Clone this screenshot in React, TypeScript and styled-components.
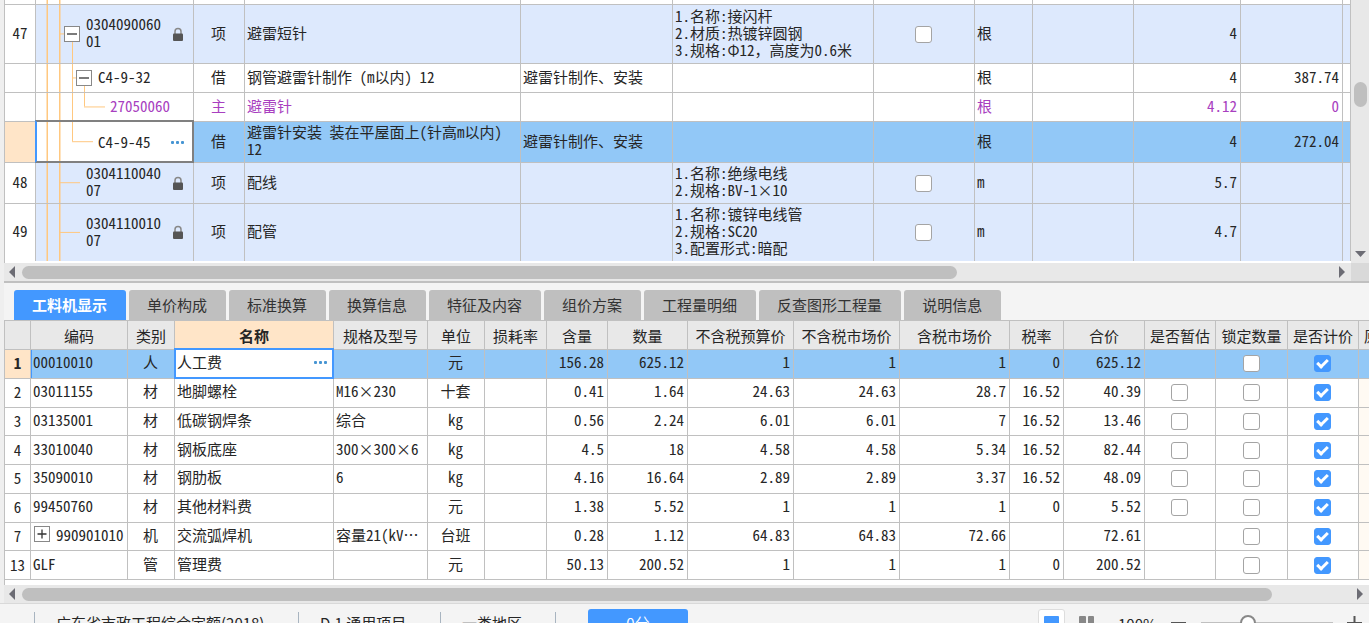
import React from "react";
import styled, { createGlobalStyle, css } from "styled-components";

const color = {
  line: "#c0c0c0",
  row: "#dde9fd",
  active: "#92c8f7",
  primary: "#4398ff",
  cream: "#ffe5c8",
  header: "#e8e8e8",
  panel: "#f4f4f4",
  text: "#262626",
  purple: "#a83fc0",
  tree: "#ffc880",
};

const GlobalStyle = createGlobalStyle`
  *, *::after { box-sizing: border-box; }
  body { margin: 0; overflow: hidden; }
  body, button, input { font-family: "Noto Sans CJK SC", sans-serif; font-size: 15px; color: ${color.text}; }
  button { border: 0; padding: 0; background: none; cursor: pointer; }
`;

const Shell = styled.div`
  height: 100vh;
  overflow: hidden;
  background: ${color.panel};
`;

const Workspace = styled.main`
  border-left: 4px solid #efefef;
`;

const BillPanel = styled.section`
  display: grid;
  grid-template-columns: minmax(0, 1fr) 18px;
  border-bottom: 2px solid ${color.line};
  background: #fff;
`;

const TableView = styled.div<{ $gap: number }>`
  overflow: hidden;
  border-left: 1px solid ${color.line};
  padding-bottom: ${(p) => p.$gap}px;
  background: #fff;
`;

const Table = styled.table`
  width: 100%;
  table-layout: fixed;
  border-collapse: separate;
  border-spacing: 0;
  font-feature-settings: "hwid";
  line-height: 17px;
`;

const ResourceTable = styled(Table)`
  width: 1425px;
  min-width: 100%;
  height: 259px;
`;

type Align = "left" | "center" | "right";

const Cell = styled.td<{ $align?: Align }>`
  position: relative;
  padding: 0 3px 4px 2px;
  border: solid ${color.line};
  border-width: 0 1px 1px 0;
  text-align: ${(p) => p.$align ?? "left"};
  white-space: pre-line;
  overflow: hidden;
`;

const IndexCell = styled.th<{ $current?: boolean; $bold?: boolean }>`
  padding: 0 0 2px;
  border: solid ${color.line};
  border-width: 0 1px 1px 0;
  background: ${(p) => (p.$current ? color.cream : "#fff")};
  font-weight: ${(p) => (p.$bold ? 700 : 400)};
`;

const HeadCell = styled.th<{ $current?: boolean }>`
  height: 29px;
  padding: 0;
  border: solid ${color.line};
  border-width: 0 1px 1px 0;
  background: ${(p) => (p.$current ? color.cream : color.header)};
  font-weight: ${(p) => (p.$current ? 700 : 400)};
  white-space: nowrap;
  overflow: hidden;
`;

const BillRow = styled.tr<{ $height: number; $tone: "bill" | "plain" | "active"; $purple?: boolean }>`
  height: ${(p) => p.$height}px;
  background: ${(p) => ({ bill: color.row, plain: "#fff", active: color.active })[p.$tone]};
  color: ${(p) => (p.$purple ? color.purple : color.text)};
  &:last-child > * { border-bottom: 0; }
  > th { padding-bottom: 4px; }
`;

const ResourceRow = styled.tr<{ $active?: boolean }>`
  background: ${(p) => (p.$active ? color.active : "#fff")};
`;

const ExtraCell = styled(Cell)<{ $active?: boolean }>`
  background: ${(p) => (p.$active ? color.active : "#fffaf3")};
`;

const EdgeCell = styled(Cell)`
  padding: 0;
`;

const Wide = styled.span`
  font-feature-settings: "fwid";
`;

const activeFrame = css`
  overflow: visible;
  background: #fff;
  &::after {
    content: "";
    position: absolute;
    inset: -2px -1px -1px -1px;
    border: 2px solid ${color.primary};
    pointer-events: none;
  }
`;

const TreeCell = styled(Cell)<{ $editing?: boolean }>`
  padding: 0;
  ${(p) =>
    p.$editing &&
    css`
      ${activeFrame}
      &::after { border-color: #808080 #808080 #808080 ${color.primary}; }
    `}
`;

const TreeContent = styled.div<{ $indent: number }>`
  position: relative;
  display: flex;
  align-items: center;
  gap: 6px;
  padding: 0 9px 0 ${(p) => p.$indent}px;
  > svg { flex: none; margin-left: auto; }
`;

const TreeLines = styled.svg`
  position: absolute;
  inset: 0;
  width: 100%;
  height: 100%;
  fill: ${color.tree};
`;

const Code = styled.span`
  flex: 0 0 76px;
  padding-bottom: 4px;
  word-break: break-all;
`;

const NameCell = styled(Cell)`
  padding-bottom: 2px;
  ${activeFrame}
`;

const CodeCell = styled(Cell)<{ $marked?: boolean }>`
  ${(p) => p.$marked && css`box-shadow: inset 1px 0 0 ${color.primary};`}
`;

const EditRow = styled.div`
  display: flex;
  align-items: center;
  padding-right: 3px;
`;

const TextInput = styled.input`
  flex: 1;
  min-width: 0;
  height: 20px;
  padding: 0 0 2px;
  border: 0;
  outline: 0;
  background: none;
  font-feature-settings: "hwid";
`;

const DotsButton = styled.button`
  display: flex;
  gap: 2px;
  span { width: 3px; height: 3px; border-radius: 1px; background: #4695d3; }
`;

const Toggle = styled.button`
  flex: none;
  display: inline-flex;
  width: 16px;
  height: 16px;
  border: 1px solid #888;
  background: #fff;
  svg { width: 14px; height: 14px; stroke: #333; }
`;

const CodeWithToggle = styled.span`
  display: flex;
  align-items: center;
  gap: 6px;
  padding-left: 1px;
`;

const Check = styled.input`
  appearance: none;
  display: block;
  position: relative;
  width: 17px;
  height: 17px;
  margin: 4px auto 0;
  border: 1px solid #a4a4a4;
  border-radius: 3px;
  background: #fff;
  &:checked { border-color: ${color.primary}; background: ${color.primary}; }
  &:checked::after {
    content: "";
    position: absolute;
    left: 4px;
    top: 1px;
    width: 7px;
    height: 11px;
    border: solid #fff;
    border-width: 0 3px 3px 0;
    transform: rotate(45deg);
  }
`;

const ScrollTrack = styled.div<{ $vertical?: boolean }>`
  display: flex;
  align-items: center;
  background: ${color.header};
  ${(p) => (p.$vertical ? "flex-direction: column; padding-bottom: 3px;" : "height: 18px; padding: 0 5px;")}
`;

const ScrollRail = styled.div<{ $vertical?: boolean }>`
  flex: 1;
  display: flex;
  ${(p) => (p.$vertical ? "flex-direction: column;" : "margin: 0 6px;")}
`;

const Space = styled.div<{ $grow: number }>`
  flex: ${(p) => p.$grow} 1 0;
`;

const Thumb = styled(Space)`
  min-width: 13px;
  min-height: 13px;
  border-radius: 7px;
  background: #bfbfbf;
`;

const Arrow = styled.button`
  display: flex;
  svg { fill: #6c6c74; display: block; }
`;

const Corner = styled.div`
  background: #d9d9d9;
`;

const TabBar = styled.nav`
  display: flex;
  gap: 3px;
  padding: 7px 0 0 10px;
  border-bottom: 1px solid ${color.line};
`;

const Tab = styled.button<{ $active?: boolean }>`
  height: 30px;
  padding: 0 19px 2px 18px;
  border-radius: 3px 3px 0 0;
  white-space: nowrap;
  background: ${(p) => (p.$active ? color.primary : "#bfbfbf")};
  color: ${(p) => (p.$active ? "#fff" : "#333")};
  font-weight: ${(p) => (p.$active ? 700 : 400)};
`;

const StatusBar = styled.footer`
  display: flex;
  align-items: center;
  height: 38px;
  border-top: 1px solid #d9d9d9;
  padding-left: 34px;
  white-space: nowrap;
`;

const StatusItem = styled.span<{ $width: number }>`
  width: ${(p) => p.$width}px;
  height: 24px;
  margin-top: 3px;
  padding-left: 21px;
  border-left: 1px solid #a8b4c0;
  line-height: 22px;
`;

const ScoreButton = styled.button`
  width: 100px;
  height: 27px;
  border-radius: 3px;
  background: ${color.primary};
  color: #fff;
`;

const ViewTools = styled.div`
  display: flex;
  align-items: center;
  gap: 14px;
  margin-left: auto;
  padding-right: 6px;
`;

const ViewButton = styled.button<{ $active?: boolean }>`
  display: grid;
  place-items: center;
  width: ${(p) => (p.$active ? 27 : 16)}px;
  height: 27px;
  border-radius: 3px;
  ${(p) => p.$active && "border: 1px solid #ddd; background: #fff;"}
`;

const ZoomValue = styled.span`
  width: 39px;
  margin: 2px 0 0 9px;
`;

const ZoomSlider = styled.input`
  appearance: none;
  width: 132px;
  height: 16px;
  margin: 0;
  background: linear-gradient(#c0c0c0, #c0c0c0) center / 100% 2px no-repeat;
  &::-webkit-slider-thumb {
    appearance: none;
    box-sizing: border-box;
    width: 16px;
    height: 16px;
    border: 2px solid #888;
    border-radius: 50%;
    background: #fff;
  }
`;

const Dots = () => (
  <DotsButton type="button" aria-label="更多">
    <span />
    <span />
    <span />
  </DotsButton>
);

const Lock = () => (
  <svg width="12" height="15" viewBox="0 0 12 15" aria-hidden>
    <path d="M3 7V4.500a3 3 0 0 1 6 0V7" fill="none" stroke="#888" strokeWidth="1.5" />
    <rect x="1" y="6.500" width="10" height="7.500" rx="1" fill="#555" />
  </svg>
);

const ToggleBox = ({ open }: { open?: boolean }) => (
  <Toggle type="button" aria-label={open ? "收起" : "展开"}>
    <svg viewBox="0 0 14 14">
      <path d={open ? "M2 7h10" : "M2.500 7h9M7 2.500v9"} strokeWidth="1.3" />
    </svg>
  </Toggle>
);

const arrowPaths = { left: "M6 0v12L0 6z", right: "M0 0v12l6-6z", down: "M1 3h11L6.500 9z" };

const ArrowButton = ({ to, label }: { to: keyof typeof arrowPaths; label: string }) => (
  <Arrow type="button" aria-label={label}>
    <svg width={to === "down" ? 13 : 7} height="12">
      <path d={arrowPaths[to]} />
    </svg>
  </Arrow>
);

const HorizontalScroll = ({ size, rest }: { size: number; rest: number }) => (
  <ScrollTrack>
    <ArrowButton to="left" label="向左滚动" />
    <ScrollRail>
      <Thumb $grow={size} />
      <Space $grow={rest} />
    </ScrollRail>
    <ArrowButton to="right" label="向右滚动" />
  </ScrollTrack>
);

/* Guide segments: [x1, y1, x2, y2], y as a share of the row height. */
type Segment = [number, number, number, number];

interface Bill {
  no?: string;
  code: string;
  kind: string;
  name: string;
  work?: string;
  feature?: React.ReactNode;
  check?: boolean;
  unit: string;
  qty: string;
  price?: string;
  height: number;
  tone: "bill" | "plain" | "active";
  purple?: boolean;
  indent: number;
  open?: boolean;
  lines: Segment[];
}

const bills: Bill[] = [
  {
    no: "47", code: "030409006001", kind: "项", name: "避雷短针",
    feature: <>{"1.名称:接闪杆\n2.材质:热镀锌圆钢\n3.规格:"}<Wide>Φ</Wide>12<Wide>，</Wide>高度为0.6米</>,
    check: true, unit: "根", qty: "4", height: 59, tone: "bill", indent: 28, open: true,
    lines: [[23, 49, 28, 49], [36, 50, 36, 100]],
  },
  {
    code: "C4-9-32", kind: "借", name: "钢管避雷针制作 (m以内) 12", work: "避雷针制作、安装",
    unit: "根", qty: "4", price: "387.74", height: 29, tone: "plain", indent: 40, open: true,
    lines: [[36, 0, 36, 100], [36, 48, 41, 48], [48, 50, 48, 100]],
  },
  {
    code: "27050060", kind: "主", name: "避雷针", unit: "根", qty: "4.12", price: "0",
    height: 29, tone: "plain", purple: true, indent: 74,
    lines: [[36, 0, 36, 100], [48, 0, 48, 48], [48, 48, 69, 48]],
  },
  {
    code: "C4-9-45", kind: "借", name: "避雷针安装 装在平屋面上(针高m以内)\n12", work: "避雷针制作、安装",
    unit: "根", qty: "4", price: "272.04", height: 41, tone: "active", indent: 62,
    lines: [[36, 0, 36, 48], [36, 48, 57, 48]],
  },
  {
    no: "48", code: "030411004007", kind: "项", name: "配线",
    feature: "1.名称:绝缘电线\n2.规格:BV-1×10",
    check: true, unit: "m", qty: "5.7", height: 41, tone: "bill", indent: 50,
    lines: [[23, 48, 44, 48]],
  },
  {
    no: "49", code: "030411001007", kind: "项", name: "配管",
    feature: "1.名称:镀锌电线管\n2.规格:SC20\n3.配置形式:暗配",
    check: true, unit: "m", qty: "4.7", height: 57, tone: "bill", indent: 50,
    lines: [[23, 49, 44, 49]],
  },
];

const Guides = ({ lines = [] }: { lines?: Segment[] }) => (
  <TreeLines aria-hidden>
    <rect x="10.500" width="1.500" height="100%" />
    <rect x="23" width="1.500" height="100%" />
    {lines.map(([x1, y1, x2, y2], i) =>
      x1 === x2 ? (
        <rect key={i} x={x1} y={`${y1}%`} width="1" height={`${y2 - y1}%`} />
      ) : (
        <rect key={i} x={x1} y={`${y1}%`} width={x2 - x1} height="1" />
      ),
    )}
  </TreeLines>
);

const BillLine = ({ bill }: { bill: Bill }) => {
  const editing = bill.tone === "active";
  return (
    <BillRow $height={bill.height} $tone={bill.tone} $purple={bill.purple}>
      <IndexCell scope="row" $current={editing}>{bill.no}</IndexCell>
      <TreeCell $editing={editing}>
        <Guides lines={bill.lines} />
        <TreeContent $indent={bill.indent}>
          {bill.open && <ToggleBox open />}
          {editing ? (
            <>
              <TextInput aria-label="编码" defaultValue={bill.code} />
              <Dots />
            </>
          ) : (
            <Code>{bill.code}</Code>
          )}
          {bill.no && <Lock />}
        </TreeContent>
      </TreeCell>
      <Cell $align="center">{bill.kind}</Cell>
      <Cell>{bill.name}</Cell>
      <Cell>{bill.work}</Cell>
      <Cell>{bill.feature}</Cell>
      <Cell>{bill.check && <Check type="checkbox" aria-label={`选择${bill.name}`} />}</Cell>
      <Cell>{bill.unit}</Cell>
      <Cell />
      <Cell $align="right">{bill.qty}</Cell>
      <Cell $align="right">{bill.price}</Cell>
      <Cell />
    </BillRow>
  );
};

const billColumns = [31, 158, 51, 276, 152, 201, 101, 58, 101, 107, 102];

const tabs = [
  "工料机显示", "单价构成", "标准换算", "换算信息", "特征及内容",
  "组价方案", "工程量明细", "反查图形工程量", "说明信息",
];

const columns: { title: string; width: number }[] = [
  { title: "", width: 26 },
  { title: "编码", width: 97 },
  { title: "类别", width: 47 },
  { title: "名称", width: 159 },
  { title: "规格及型号", width: 94 },
  { title: "单位", width: 57 },
  { title: "损耗率", width: 62 },
  { title: "含量", width: 61 },
  { title: "数量", width: 80 },
  { title: "不含税预算价", width: 106 },
  { title: "不含税市场价", width: 106 },
  { title: "含税市场价", width: 110 },
  { title: "税率", width: 54 },
  { title: "合价", width: 81 },
  { title: "是否暂估", width: 71 },
  { title: "锁定数量", width: 72 },
  { title: "是否计价", width: 71 },
  { title: "原始含量", width: 71 },
];

/* no, code, kind, name, spec, unit, content, quantity, budget, market, taxed, rate, total, estimate box */
type Resource = [string, string, string, string, string, string, string, string, string, string, string, string, string, boolean];

const resources: Resource[] = [
  ["1", "00010010", "人", "人工费", "", "元", "156.28", "625.12", "1", "1", "1", "0", "625.12", false],
  ["2", "03011155", "材", "地脚螺栓", "M16×230", "十套", "0.41", "1.64", "24.63", "24.63", "28.7", "16.52", "40.39", true],
  ["3", "03135001", "材", "低碳钢焊条", "综合", "kg", "0.56", "2.24", "6.01", "6.01", "7", "16.52", "13.46", true],
  ["4", "33010040", "材", "钢板底座", "300×300×6", "kg", "4.5", "18", "4.58", "4.58", "5.34", "16.52", "82.44", true],
  ["5", "35090010", "材", "钢肋板", "6", "kg", "4.16", "16.64", "2.89", "2.89", "3.37", "16.52", "48.09", true],
  ["6", "99450760", "材", "其他材料费", "", "元", "1.38", "5.52", "1", "1", "1", "0", "5.52", true],
  ["7", "990901010", "机", "交流弧焊机", "容量21(kV⋯", "台班", "0.28", "1.12", "64.83", "64.83", "72.66", "", "72.61", false],
  ["13", "GLF", "管", "管理费", "", "元", "50.13", "200.52", "1", "1", "1", "0", "200.52", false],
];

const ResourceLine = ({ item, active }: { item: Resource; active: boolean }) => {
  const [no, code, kind, name, spec, unit, ...rest] = item;
  const numbers = rest.slice(0, 7) as string[];
  const estimate = rest[7];
  return (
    <ResourceRow $active={active}>
      <IndexCell scope="row" $current={active} $bold={active}>{no}</IndexCell>
      <CodeCell $marked={active}>
        {no === "7" ? (
          <CodeWithToggle>
            <ToggleBox />
            {code}
          </CodeWithToggle>
        ) : (
          code
        )}
      </CodeCell>
      <Cell $align="center">{kind}</Cell>
      {active ? (
        <NameCell>
          <EditRow>
            <TextInput aria-label="名称" defaultValue={name} />
            <Dots />
          </EditRow>
        </NameCell>
      ) : (
        <Cell>{name}</Cell>
      )}
      <Cell>{spec}</Cell>
      <Cell $align="center">{unit}</Cell>
      <Cell />
      {numbers.map((value, i) => (
        <Cell key={i} $align="right">{value}</Cell>
      ))}
      <Cell>{estimate && <Check type="checkbox" aria-label={`${name}是否暂估`} />}</Cell>
      <Cell><Check type="checkbox" aria-label={`${name}锁定数量`} /></Cell>
      <Cell><Check type="checkbox" defaultChecked aria-label={`${name}是否计价`} /></Cell>
      <ExtraCell $active={active} />
    </ResourceRow>
  );
};

export default function App() {
  return (
    <Shell lang="zh-CN">
      <GlobalStyle />
      <Workspace>
        <BillPanel>
          <TableView $gap={2}>
            <Table>
              <colgroup>
                {billColumns.map((width, i) => <col key={i} width={width} />)}
                <col />
              </colgroup>
              <tbody>
                <BillRow $height={5} $tone="plain">
                  <EdgeCell />
                  <TreeCell><Guides /></TreeCell>
                  {billColumns.slice(1).map((_, i) => <EdgeCell key={i} />)}
                </BillRow>
                {bills.map((bill) => <BillLine key={bill.code} bill={bill} />)}
              </tbody>
            </Table>
          </TableView>
          <ScrollTrack $vertical>
            <ScrollRail $vertical>
              <Space $grow={82} />
              <Thumb $grow={25} />
              <Space $grow={141} />
            </ScrollRail>
            <ArrowButton to="down" label="向下滚动" />
          </ScrollTrack>
          <HorizontalScroll size={936} rest={376} />
          <Corner />
        </BillPanel>
        <TabBar>
          {tabs.map((tab, i) => (
            <Tab key={tab} type="button" $active={i === 0}>{tab}</Tab>
          ))}
        </TabBar>
        <TableView $gap={5}>
          <ResourceTable>
            <colgroup>
              {columns.map((column, i) => <col key={i} width={column.width} />)}
            </colgroup>
            <thead>
              <tr>
                {columns.map((column, i) => (
                  <HeadCell key={i} scope="col" $current={column.title === "名称"}>{column.title}</HeadCell>
                ))}
              </tr>
            </thead>
            <tbody>
              {resources.map((item, i) => <ResourceLine key={item[0]} item={item} active={i === 0} />)}
            </tbody>
          </ResourceTable>
        </TableView>
        <HorizontalScroll size={1251} rest={79} />
      </Workspace>
      <StatusBar>
        <StatusItem $width={264}>广东省市政工程综合定额(2018)</StatusItem>
        <StatusItem $width={142}>D.1 通用项目</StatusItem>
        <StatusItem $width={115}>一类地区</StatusItem>
        <StatusItem $width={33} />
        <ScoreButton type="button">0分</ScoreButton>
        <ViewTools>
          <ViewButton type="button" $active aria-label="单页视图">
            <svg width="15" height="14"><rect width="15" height="14" rx="1" fill={color.primary} /></svg>
          </ViewButton>
          <ViewButton type="button" aria-label="双页视图">
            <svg width="16" height="14" fill="#888">
              <rect width="7" height="14" rx="1" />
              <rect x="9" width="6" height="14" rx="1" />
            </svg>
          </ViewButton>
          <ZoomValue>100%</ZoomValue>
          <ViewButton type="button" aria-label="缩小">
            <svg width="16" height="14"><path d="M0 7h15" stroke="#555" strokeWidth="2" /></svg>
          </ViewButton>
          <ZoomSlider type="range" aria-label="缩放" min={0} max={100} defaultValue={34} />
          <ViewButton type="button" aria-label="放大">
            <svg width="16" height="14"><path d="M0 7h15M7.500 0v14" stroke="#555" strokeWidth="2" /></svg>
          </ViewButton>
        </ViewTools>
      </StatusBar>
    </Shell>
  );
}
